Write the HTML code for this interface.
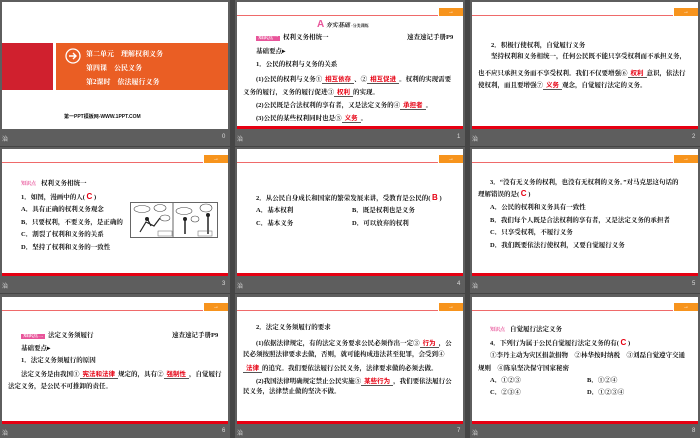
<!DOCTYPE html>
<html><head><meta charset="utf-8"><style>
*{margin:0;padding:0;box-sizing:border-box}
body{width:700px;height:438px;background:#454545;position:relative;overflow:hidden;font-family:"Liberation Serif","Noto Serif CJK SC","Noto Sans CJK SC",serif;}
.cell{position:absolute;background:#5e5e5e}
.s{position:absolute;width:226px;height:127px;background:#fff;overflow:hidden}
.rl{position:absolute;left:0;top:13px;width:201px;height:1px;background:#ef6a6a}
.tab{position:absolute;left:202px;top:6px;width:24px;height:8px;background:#f7941d;color:#fff;font-size:6px;line-height:8px;text-align:center}
.bb{position:absolute;left:0;bottom:0;width:226px;height:3px;background:#e60012}
.l{position:absolute;font-size:6.5px;line-height:8px;white-space:nowrap;color:#111;font-weight:bold}
.r{color:#e60012;border-bottom:0.7px solid #555;padding:0 3px;font-family:"Noto Sans CJK SC",sans-serif;font-weight:bold}
.ans{color:#e60012;font-size:8px;font-family:"Liberation Sans",sans-serif}
.tag{background:#e8559a;color:#fff;font-size:5px;padding:0 2px;margin-right:3px}
.tag2{color:#e8559a;font-size:5px;margin-right:5px}
.lab{position:absolute;color:#ddd;font-size:6px;font-family:"Liberation Sans","Noto Sans CJK SC",sans-serif}
</style></head><body>
<div class="cell" style="left:0;top:0;width:230px;height:146px"></div>
<div class="cell" style="left:235px;top:0;width:230px;height:146px"></div>
<div class="cell" style="left:470px;top:0;width:230px;height:146px"></div>
<div class="cell" style="left:0;top:147px;width:230px;height:146px"></div>
<div class="cell" style="left:235px;top:147px;width:230px;height:146px"></div>
<div class="cell" style="left:470px;top:147px;width:230px;height:146px"></div>
<div class="cell" style="left:0;top:294px;width:230px;height:144px"></div>
<div class="cell" style="left:235px;top:294px;width:230px;height:144px"></div>
<div class="cell" style="left:470px;top:294px;width:230px;height:144px"></div>

<div class="lab" style="left:2px;top:134px">治</div><div class="lab" style="left:222px;top:134px">0</div>
<div class="lab" style="left:237px;top:134px">治</div><div class="lab" style="left:457px;top:134px">1</div>
<div class="lab" style="left:472px;top:134px">治</div><div class="lab" style="left:692px;top:134px">2</div>
<div class="lab" style="left:2px;top:281px">治</div><div class="lab" style="left:222px;top:281px">3</div>
<div class="lab" style="left:237px;top:281px">治</div><div class="lab" style="left:457px;top:281px">4</div>
<div class="lab" style="left:472px;top:281px">治</div><div class="lab" style="left:692px;top:281px">5</div>
<div class="lab" style="left:2px;top:428px">治</div><div class="lab" style="left:222px;top:428px">6</div>
<div class="lab" style="left:237px;top:428px">治</div><div class="lab" style="left:457px;top:428px">7</div>
<div class="lab" style="left:472px;top:428px">治</div><div class="lab" style="left:692px;top:428px">8</div>

<div class="s" style="left:2px;top:2px">
<div style="position:absolute;left:0;top:41px;width:51px;height:47px;background:#d0202e"></div>
<div style="position:absolute;left:54px;top:41px;width:172px;height:47px;background:#ea5e24"></div>
<svg style="position:absolute;left:63px;top:46px" width="16" height="16" viewBox="0 0 16 16"><circle cx="8" cy="8" r="7" fill="none" stroke="#fff" stroke-width="1.3"/><path d="M4 8h7M8 5l3 3-3 3" fill="none" stroke="#fff" stroke-width="1.4"/></svg>
<div class="l" style="left:84px;top:48px;color:#fff;font-size:7px">第二单元　理解权利义务</div>
<div class="l" style="left:84px;top:62px;color:#fff;font-size:7px">第四课　公民义务</div>
<div class="l" style="left:84px;top:76px;color:#fff;font-size:7px">第2课时　依法履行义务</div>
<div class="l" style="left:62px;top:111px;font-size:5px;font-family:'Liberation Sans','Noto Sans CJK SC',sans-serif">第一PPT模板网-WWW.1PPT.COM</div>
</div>

<div class="s" style="left:237px;top:2px">
<div class="rl"></div><div class="tab">→</div>
<div class="l" style="left:80px;top:19px;font-size:6px"><span style="color:#e8559a;font-size:10px;font-family:'Liberation Sans',sans-serif">A</span> <i>夯实基础</i> <span style="font-size:4px">·分类训练</span></div>
<div class="l" style="left:19px;top:32px"><span class="tag">知识点一</span>权利义务相统一</div>
<div class="l" style="left:170px;top:32px">速查速记手册P9</div>
<div class="l" style="left:19px;top:46px">基础要点▸</div>
<div class="l" style="left:19px;top:59px">1．公民的权利与义务的关系</div>
<div class="l" style="left:19px;top:72px">(1)公民的权利与义务①<span class="r">相互依存</span>、②<span class="r">相互促进</span>。权利的实现需要</div>
<div class="l" style="left:6px;top:85px">义务的履行，义务的履行促进③<span class="r">权利</span>的实现。</div>
<div class="l" style="left:19px;top:98px">(2)公民既是合法权利的享有者，又是法定义务的④<span class="r">承担者</span>。</div>
<div class="l" style="left:19px;top:111px">(3)公民的某些权利同时也是⑤<span class="r">义务</span>。</div>
<div class="bb"></div>
</div>

<div class="s" style="left:472px;top:2px">
<div class="rl"></div><div class="tab">→</div>
<div class="l" style="left:19px;top:40px">2．积极行使权利，自觉履行义务</div>
<div class="l" style="left:19px;top:51px">坚持权利和义务相统一，任何公民既不能只享受权利而不承担义务，</div>
<div class="l" style="left:6px;top:66px">也不应只承担义务而不享受权利。我们不仅要增强⑥<span class="r">权利</span>意识，依法行</div>
<div class="l" style="left:6px;top:78px">使权利，而且要增强⑦<span class="r">义务</span>观念，自觉履行法定的义务。</div>
<div class="bb"></div>
</div>

<div class="s" style="left:2px;top:149px">
<div class="rl"></div><div class="tab">→</div>
<div class="l" style="left:19px;top:31px"><span class="tag2">知识点</span>权利义务相统一</div>
<div class="l" style="left:19px;top:44px">1．如图，漫画中的人( <span class="ans">C</span> )</div>
<div class="l" style="left:19px;top:57px">A．具有正确的权利义务观念</div>
<div class="l" style="left:19px;top:70px">B．只要权利，不要义务，是正确的</div>
<div class="l" style="left:19px;top:82px">C．割裂了权利和义务的关系</div>
<div class="l" style="left:19px;top:95px">D．坚持了权利和义务的一致性</div>
<svg style="position:absolute;left:128px;top:53px" width="88" height="36" viewBox="0 0 88 36"><rect x="0.5" y="0.5" width="87" height="35" fill="#fff" stroke="#666"/><line x1="43" y1="0" x2="43" y2="36" stroke="#666"/><ellipse cx="12" cy="7" rx="8" ry="3.5" fill="none" stroke="#444" stroke-width=".6"/><ellipse cx="30" cy="6" rx="6" ry="3.5" fill="none" stroke="#444" stroke-width=".6"/><ellipse cx="35" cy="16" rx="5" ry="3" fill="none" stroke="#444" stroke-width=".6"/><path d="M10 30l6-10 8 4 6-8M18 18l3 6" stroke="#222" stroke-width="1.2" fill="none"/><circle cx="17" cy="17" r="2" fill="#222"/><ellipse cx="54" cy="9" rx="8" ry="3.5" fill="none" stroke="#444" stroke-width=".6"/><ellipse cx="76" cy="6" rx="6" ry="4" fill="none" stroke="#444" stroke-width=".6"/><ellipse cx="65" cy="17" rx="4" ry="3" fill="none" stroke="#444" stroke-width=".6"/><path d="M55 18v14M78 14v18" stroke="#222" stroke-width="1.5"/><circle cx="55" cy="17" r="2" fill="#222"/><circle cx="78" cy="13" r="2" fill="#222"/><rect x="28" y="29" width="14" height="5" fill="none" stroke="#666" stroke-width=".5"/><rect x="68" y="29" width="14" height="5" fill="none" stroke="#666" stroke-width=".5"/></svg>
<div class="bb"></div>
</div>

<div class="s" style="left:237px;top:149px">
<div class="rl"></div><div class="tab">→</div>
<div class="l" style="left:19px;top:45px">2．从公民自身成长和国家的繁荣发展来讲，受教育是公民的( <span class="ans">B</span> )</div>
<div class="l" style="left:19px;top:58px">A．基本权利</div>
<div class="l" style="left:115px;top:58px">B．既是权利也是义务</div>
<div class="l" style="left:19px;top:71px">C．基本义务</div>
<div class="l" style="left:115px;top:71px">D．可以放弃的权利</div>
<div class="bb"></div>
</div>

<div class="s" style="left:472px;top:149px">
<div class="rl"></div><div class="tab">→</div>
<div class="l" style="left:18px;top:30px">3．“没有无义务的权利，也没有无权利的义务。”对马克思这句话的</div>
<div class="l" style="left:6px;top:41px">理解错误的是( <span class="ans">C</span> )</div>
<div class="l" style="left:18px;top:55px">A．公民的权利和义务具有一致性</div>
<div class="l" style="left:18px;top:68px">B．我们每个人既是合法权利的享有者，又是法定义务的承担者</div>
<div class="l" style="left:18px;top:80px">C．只享受权利，不履行义务</div>
<div class="l" style="left:18px;top:93px">D．我们既要依法行使权利，又要自觉履行义务</div>
<div class="bb"></div>
</div>

<div class="s" style="left:2px;top:297px">
<div class="rl"></div><div class="tab">→</div>
<div class="l" style="left:19px;top:35px"><span class="tag">知识点二</span>法定义务须履行</div>
<div class="l" style="left:170px;top:35px">速查速记手册P9</div>
<div class="l" style="left:19px;top:48px">基础要点▸</div>
<div class="l" style="left:19px;top:60px">1．法定义务须履行的原因</div>
<div class="l" style="left:19px;top:72px">法定义务是由我国①<span class="r">宪法和法律</span>规定的，具有②<span class="r">强制性</span>，自觉履行</div>
<div class="l" style="left:6px;top:86px">法定义务，是公民不可推卸的责任。</div>
<div class="bb"></div>
</div>

<div class="s" style="left:237px;top:297px">
<div class="rl"></div><div class="tab">→</div>
<div class="l" style="left:19px;top:27px">2．法定义务须履行的要求</div>
<div class="l" style="left:19px;top:41px">(1)依据法律规定，有的法定义务要求公民必须作出一定③<span class="r">行为</span>，公</div>
<div class="l" style="left:6px;top:54px">民必须按照法律要求去做，否则，就可能构成违法甚至犯罪，会受到④</div>
<div class="l" style="left:6px;top:66px"><span class="r">法律</span>的追究。我们要依法履行公民义务，法律要求做的必须去做。</div>
<div class="l" style="left:19px;top:79px">(2)我国法律明确规定禁止公民实施⑤<span class="r">某些行为</span>，我们要依法履行公</div>
<div class="l" style="left:6px;top:91px">民义务，法律禁止做的坚决不做。</div>
<div class="bb"></div>
</div>

<div class="s" style="left:472px;top:297px">
<div class="rl"></div><div class="tab">→</div>
<div class="l" style="left:18px;top:29px"><span class="tag2">知识点</span>自觉履行法定义务</div>
<div class="l" style="left:18px;top:42px">4．下列行为属于公民自觉履行法定义务的有( <span class="ans">C</span> )</div>
<div class="l" style="left:18px;top:55px">①李丹主动为灾区捐款捐物　②林华按时纳税　③刘磊自觉遵守交通</div>
<div class="l" style="left:6px;top:68px">规则　④陈泉坚决保守国家秘密</div>
<div class="l" style="left:18px;top:80px">A．①②③</div>
<div class="l" style="left:115px;top:80px">B．①②④</div>
<div class="l" style="left:18px;top:92px">C．②③④</div>
<div class="l" style="left:115px;top:92px">D．①②③④</div>
<div class="bb"></div>
</div>
</body></html>
